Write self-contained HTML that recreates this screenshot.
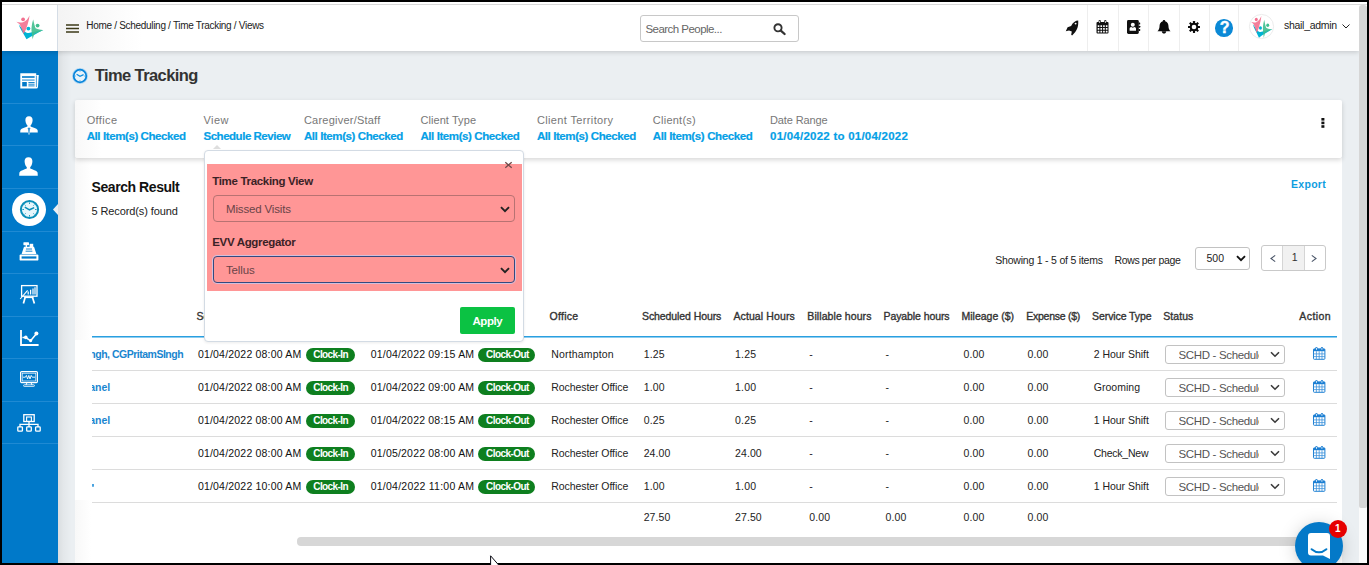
<!DOCTYPE html>
<html lang="en"><head><meta charset="utf-8"><title>Time Tracking</title>
<style>
html,body{margin:0;padding:0;}
body{width:1369px;height:565px;overflow:hidden;position:relative;background:#000;font-family:"Liberation Sans",sans-serif;}
.a{position:absolute;box-sizing:border-box;}
.t{position:absolute;white-space:nowrap;font-family:"Liberation Sans",sans-serif;z-index:10;}
#page{left:2px;top:2px;width:1365px;height:561px;background:#ebeff2;overflow:hidden;}
#topline{left:2px;top:2px;width:1365px;height:3px;background:#fff;border-bottom:1px solid #d9d9d9;z-index:6;}
#header{left:2px;top:5px;width:1357px;height:46px;background:linear-gradient(90deg,#f4f4f4 58px,#ffffff 140px);box-shadow:0 1px 5px rgba(0,0,0,.18);z-index:5;}
#logo{left:2px;top:5px;width:56px;height:46px;background:#fff;border-right:1px solid #d5dde6;z-index:6;}
#side{left:2px;top:51px;width:56px;height:512px;background:#0079c9;z-index:4;}
.sep{left:2px;width:56px;height:1px;background:#1f8ad3;z-index:4;}
.vsep{top:5px;width:1px;height:46px;background:#eeeeee;z-index:6;}
.card{background:#fff;}
#filter{left:75px;top:100px;width:1267px;height:58px;background:linear-gradient(90deg,#f8f8f8 0,#fff 26px);box-shadow:0 2px 5px rgba(0,0,0,.16);border-radius:2px;z-index:3;}
#result{left:75px;top:158px;width:1267px;height:405px;background:linear-gradient(90deg,#f8f8f8 0,#fff 16px);z-index:2;}
.rline{left:92px;width:1245px;height:1px;background:#dcdcdc;z-index:3;}
.badge{height:13.4px;border-radius:7px;background:#0e7f1f;z-index:4;}
.sel{background:#fff;border:1px solid #c2c2c2;border-radius:3px;z-index:4;}
svg{position:absolute;overflow:visible;}

</style></head><body>
<div class="a" id="page"></div>
<div class="a" id="topline"></div>
<div class="a" id="header"></div>
<div class="a" id="logo"></div>
<div class="a" id="side"></div>
<!-- scrollbar -->
<div class="a" style="left:1359px;top:5px;width:8px;height:558px;background:#fbfbfb;z-index:7;"></div>
<div class="a" style="left:1359.3px;top:5px;width:7.7px;height:503px;background:#d6d6d6;border-radius:3px 3px 2px 2px;z-index:8;"></div>
<!-- cards -->
<div class="a" id="result"></div>
<div class="a" id="filter"></div>
<div class="a sep" style="top:103px"></div>
<div class="a sep" style="top:145px"></div>
<div class="a sep" style="top:188px"></div>
<div class="a sep" style="top:231px"></div>
<div class="a sep" style="top:273px"></div>
<div class="a sep" style="top:316px"></div>
<div class="a sep" style="top:358px"></div>
<div class="a sep" style="top:401px"></div>
<div class="a sep" style="top:443px"></div>
<div class="a vsep" style="left:1087px"></div>
<div class="a vsep" style="left:1118px"></div>
<div class="a vsep" style="left:1148px"></div>
<div class="a vsep" style="left:1179px"></div>
<div class="a vsep" style="left:1209px"></div>
<div class="a vsep" style="left:1238px"></div>
<div class="a" style="left:92px;top:336px;width:1245px;height:1px;background:#2a9fe0;z-index:3;"></div><div class="a" style="left:92px;top:337px;width:1245px;height:1px;background:#8ccdf0;z-index:3;"></div>
<div class="a rline" style="top:370px"></div>
<div class="a rline" style="top:403px"></div>
<div class="a rline" style="top:436px"></div>
<div class="a rline" style="top:469px"></div>
<div class="a rline" style="top:502px"></div>
<div class="a badge" style="left:305.8px;top:348.2px;width:49px;"></div>
<div class="a badge" style="left:478.2px;top:348.2px;width:56.6px;"></div>
<div class="a sel" style="left:1165px;top:345.0px;width:120px;height:19px;"></div>
<svg style="left:1269.8px;top:350.9px;z-index:5" width="10" height="7" viewBox="0 0 10 7"><path d="M1 1.2 L5 5.2 L9 1.2" fill="none" stroke="#3a3a3a" stroke-width="1.6"/></svg>
<svg style="left:1313.3px;top:347.3px;z-index:5" width="12.4" height="12.8" viewBox="0 0 12.4 12.8"><rect x="0.5" y="1.9" width="11.4" height="10.4" rx="0.8" fill="#fff" stroke="#1c7fd3" stroke-width="1"/><rect x="0.5" y="1.9" width="11.4" height="2.3" fill="#1c7fd3"/><rect x="2.3" y="0" width="2.3" height="3.6" rx="1.1" fill="#1c7fd3"/><rect x="7.8" y="0" width="2.3" height="3.6" rx="1.1" fill="#1c7fd3"/><rect x="3.05" y="0.7" width="0.8" height="2.2" rx="0.4" fill="#fff"/><rect x="8.55" y="0.7" width="0.8" height="2.2" rx="0.4" fill="#fff"/><path d="M0.5 6.9H11.9M0.5 9.6H11.9M3.4 4.2V12.3M6.2 4.2V12.3M9 4.2V12.3" stroke="#3f93dc" stroke-width="0.8" fill="none"/></svg>
<div class="a badge" style="left:305.8px;top:381.2px;width:49px;"></div>
<div class="a badge" style="left:478.2px;top:381.2px;width:56.6px;"></div>
<div class="a sel" style="left:1165px;top:378.0px;width:120px;height:19px;"></div>
<svg style="left:1269.8px;top:383.9px;z-index:5" width="10" height="7" viewBox="0 0 10 7"><path d="M1 1.2 L5 5.2 L9 1.2" fill="none" stroke="#3a3a3a" stroke-width="1.6"/></svg>
<svg style="left:1313.3px;top:380.3px;z-index:5" width="12.4" height="12.8" viewBox="0 0 12.4 12.8"><rect x="0.5" y="1.9" width="11.4" height="10.4" rx="0.8" fill="#fff" stroke="#1c7fd3" stroke-width="1"/><rect x="0.5" y="1.9" width="11.4" height="2.3" fill="#1c7fd3"/><rect x="2.3" y="0" width="2.3" height="3.6" rx="1.1" fill="#1c7fd3"/><rect x="7.8" y="0" width="2.3" height="3.6" rx="1.1" fill="#1c7fd3"/><rect x="3.05" y="0.7" width="0.8" height="2.2" rx="0.4" fill="#fff"/><rect x="8.55" y="0.7" width="0.8" height="2.2" rx="0.4" fill="#fff"/><path d="M0.5 6.9H11.9M0.5 9.6H11.9M3.4 4.2V12.3M6.2 4.2V12.3M9 4.2V12.3" stroke="#3f93dc" stroke-width="0.8" fill="none"/></svg>
<div class="a badge" style="left:305.8px;top:414.2px;width:49px;"></div>
<div class="a badge" style="left:478.2px;top:414.2px;width:56.6px;"></div>
<div class="a sel" style="left:1165px;top:411.0px;width:120px;height:19px;"></div>
<svg style="left:1269.8px;top:416.9px;z-index:5" width="10" height="7" viewBox="0 0 10 7"><path d="M1 1.2 L5 5.2 L9 1.2" fill="none" stroke="#3a3a3a" stroke-width="1.6"/></svg>
<svg style="left:1313.3px;top:413.3px;z-index:5" width="12.4" height="12.8" viewBox="0 0 12.4 12.8"><rect x="0.5" y="1.9" width="11.4" height="10.4" rx="0.8" fill="#fff" stroke="#1c7fd3" stroke-width="1"/><rect x="0.5" y="1.9" width="11.4" height="2.3" fill="#1c7fd3"/><rect x="2.3" y="0" width="2.3" height="3.6" rx="1.1" fill="#1c7fd3"/><rect x="7.8" y="0" width="2.3" height="3.6" rx="1.1" fill="#1c7fd3"/><rect x="3.05" y="0.7" width="0.8" height="2.2" rx="0.4" fill="#fff"/><rect x="8.55" y="0.7" width="0.8" height="2.2" rx="0.4" fill="#fff"/><path d="M0.5 6.9H11.9M0.5 9.6H11.9M3.4 4.2V12.3M6.2 4.2V12.3M9 4.2V12.3" stroke="#3f93dc" stroke-width="0.8" fill="none"/></svg>
<div class="a badge" style="left:305.8px;top:447.2px;width:49px;"></div>
<div class="a badge" style="left:478.2px;top:447.2px;width:56.6px;"></div>
<div class="a sel" style="left:1165px;top:444.0px;width:120px;height:19px;"></div>
<svg style="left:1269.8px;top:449.9px;z-index:5" width="10" height="7" viewBox="0 0 10 7"><path d="M1 1.2 L5 5.2 L9 1.2" fill="none" stroke="#3a3a3a" stroke-width="1.6"/></svg>
<svg style="left:1313.3px;top:446.3px;z-index:5" width="12.4" height="12.8" viewBox="0 0 12.4 12.8"><rect x="0.5" y="1.9" width="11.4" height="10.4" rx="0.8" fill="#fff" stroke="#1c7fd3" stroke-width="1"/><rect x="0.5" y="1.9" width="11.4" height="2.3" fill="#1c7fd3"/><rect x="2.3" y="0" width="2.3" height="3.6" rx="1.1" fill="#1c7fd3"/><rect x="7.8" y="0" width="2.3" height="3.6" rx="1.1" fill="#1c7fd3"/><rect x="3.05" y="0.7" width="0.8" height="2.2" rx="0.4" fill="#fff"/><rect x="8.55" y="0.7" width="0.8" height="2.2" rx="0.4" fill="#fff"/><path d="M0.5 6.9H11.9M0.5 9.6H11.9M3.4 4.2V12.3M6.2 4.2V12.3M9 4.2V12.3" stroke="#3f93dc" stroke-width="0.8" fill="none"/></svg>
<div class="a badge" style="left:305.8px;top:480.2px;width:49px;"></div>
<div class="a badge" style="left:478.2px;top:480.2px;width:56.6px;"></div>
<div class="a sel" style="left:1165px;top:477.0px;width:120px;height:19px;"></div>
<svg style="left:1269.8px;top:482.9px;z-index:5" width="10" height="7" viewBox="0 0 10 7"><path d="M1 1.2 L5 5.2 L9 1.2" fill="none" stroke="#3a3a3a" stroke-width="1.6"/></svg>
<svg style="left:1313.3px;top:479.3px;z-index:5" width="12.4" height="12.8" viewBox="0 0 12.4 12.8"><rect x="0.5" y="1.9" width="11.4" height="10.4" rx="0.8" fill="#fff" stroke="#1c7fd3" stroke-width="1"/><rect x="0.5" y="1.9" width="11.4" height="2.3" fill="#1c7fd3"/><rect x="2.3" y="0" width="2.3" height="3.6" rx="1.1" fill="#1c7fd3"/><rect x="7.8" y="0" width="2.3" height="3.6" rx="1.1" fill="#1c7fd3"/><rect x="3.05" y="0.7" width="0.8" height="2.2" rx="0.4" fill="#fff"/><rect x="8.55" y="0.7" width="0.8" height="2.2" rx="0.4" fill="#fff"/><path d="M0.5 6.9H11.9M0.5 9.6H11.9M3.4 4.2V12.3M6.2 4.2V12.3M9 4.2V12.3" stroke="#3f93dc" stroke-width="0.8" fill="none"/></svg>
<!-- pagination -->
<div class="a sel" style="left:1195.4px;top:247px;width:55px;height:23px;"></div>
<svg style="left:1235.5px;top:255px;z-index:5" width="10" height="7" viewBox="0 0 10 7"><path d="M1 1.2 L5 5.2 L9 1.2" fill="none" stroke="#111" stroke-width="1.9"/></svg>
<div class="a" style="left:1261px;top:245px;width:65px;height:26px;background:#fff;border:1px solid #c9c9c9;border-radius:3px;z-index:4;"></div>
<div class="a" style="left:1282px;top:246px;width:23px;height:24px;background:#f1f1f1;border-left:1px solid #d5d5d5;border-right:1px solid #d5d5d5;z-index:5;"></div>
<svg style="left:1270.2px;top:255.1px;z-index:6" width="6" height="7" viewBox="0 0 6 7"><path d="M5.2 0.4 L1 3.5 L5.2 6.6" fill="none" stroke="#4a5568" stroke-width="1.1"/></svg>
<svg style="left:1311.4px;top:255.1px;z-index:6" width="6" height="7" viewBox="0 0 6 7"><path d="M0.8 0.4 L5 3.5 L0.8 6.6" fill="none" stroke="#4a5568" stroke-width="1.1"/></svg>
<!-- horizontal scrollbar -->
<div class="a" style="left:297px;top:537px;width:1030px;height:8.8px;background:#d7d7d7;border-radius:4px;z-index:3;"></div>
<!-- popup -->
<div class="a" style="left:204px;top:150px;width:320px;height:192px;background:#fff;border:1px solid #d3dbe4;border-radius:4px;box-shadow:0 1px 3px rgba(0,0,0,.08);z-index:20;"></div>
<svg style="left:213px;top:145px;z-index:21" width="8" height="4" viewBox="0 0 8 4"><path d="M0 4 L4 0 L8 4Z" fill="#dedede"/></svg>
<div class="a" style="left:207px;top:164px;width:315px;height:127px;background:#ff9696;z-index:21;"></div>
<div class="a" style="left:213px;top:195px;width:302px;height:27px;border:1px solid #b87272;border-radius:4px;z-index:22;"></div>
<div class="a" style="left:213px;top:256px;width:302px;height:27px;border:1px solid #34497f;border-radius:4px;box-shadow:0 0 0 1px rgba(200,200,235,.8);z-index:22;"></div>
<svg style="left:500.4px;top:205.5px;z-index:23" width="10" height="7" viewBox="0 0 10 7"><path d="M1 1.2 L5 5.2 L9 1.2" fill="none" stroke="#222" stroke-width="1.9"/></svg>
<svg style="left:500.4px;top:266.5px;z-index:23" width="10" height="7" viewBox="0 0 10 7"><path d="M1 1.2 L5 5.2 L9 1.2" fill="none" stroke="#222" stroke-width="1.9"/></svg>
<svg style="left:505px;top:162px;z-index:23" width="7" height="6" viewBox="0 0 7 6"><path d="M0.3 0.2 L6.7 5.8 M6.7 0.2 L0.3 5.8" stroke="#6e4a4a" stroke-width="1.25"/></svg>
<div class="a" style="left:460px;top:307px;width:55px;height:27px;background:#0bc243;border-radius:2px;z-index:22;"></div>
<!-- chat bubble -->
<div class="a" style="left:1295px;top:521.8px;width:48.4px;height:48.4px;border-radius:50%;background:#0479c8;box-shadow:0 2px 18px rgba(0,0,0,.17),0 1px 5px rgba(0,0,0,.06);z-index:40;"></div>
<svg style="left:1308px;top:533px;z-index:41" width="22" height="26" viewBox="0 0 22 26"><path d="M3 0 H19 Q22 0 22 3 V26 L15 22.5 H3 Q0 22.5 0 19.5 V3 Q0 0 3 0Z" fill="#fff"/><path d="M3.6 16.2 Q11 22.4 18.4 16.2" fill="none" stroke="#0479c8" stroke-width="2" stroke-linecap="round"/></svg>
<div class="a" style="left:1328.6px;top:519.6px;width:18.8px;height:18.8px;border-radius:50%;background:#e60000;z-index:41;"></div>
<!-- bottom frame -->
<div class="a" style="left:0;top:563px;width:1369px;height:2px;background:#000;z-index:50;"></div>
<!-- logo -->
<svg id="lg" style="left:16px;top:14px;z-index:7" width="28" height="27" viewBox="16 14 28 27">
<g>
<path d="M18.7 24.5 C20.6 26.6 22.8 29.4 24.8 31.4 C26.6 33.2 28.6 33.4 31 32.6 C35 31.2 39 30.4 43.3 29.9 C38 32.6 32 35.8 26.5 39.3 C24.6 35.6 22.9 33 21.6 30.8 C20.3 28.6 19.4 26.4 18.7 24.5Z" fill="#00b3d4"/>
<circle cx="28.4" cy="28.6" r="1.9" fill="#00b3d4"/>
<path d="M33.2 19.4 C33.8 22 34.6 26 35.6 28.2 C38.5 29.6 41 30 43.3 29.9 C40 31.5 36.6 33 34.2 34 L32.6 39.3 C32.1 35 31.3 31 31.5 28 C31.8 24.6 32.5 21.6 33.2 19.4Z" fill="#3fbf8f" opacity=".9"/>
<circle cx="37.6" cy="25.6" r="1.9" fill="#3fbf8f"/>
<path d="M29.5 15.4 C29.2 19.4 28 23 26.8 27 C25.8 30 24.6 32.6 23.4 33.9 C22.6 31 21.2 27.5 19.6 24.2 L16.4 21.8 C19 22.8 21.5 22.8 23.6 22 C26 21 28 18.6 29.5 15.4Z" fill="#f2708f" opacity=".9"/>
<circle cx="23.1" cy="19.3" r="1.9" fill="#f2708f"/>
</g>
</svg>
<!-- avatar -->
<div class="a" style="left:1249px;top:14.2px;width:24.6px;height:24.6px;border-radius:50%;background:#fff;border:1px solid #ececec;z-index:7;"></div>
<svg style="left:1250.7px;top:15.5px;z-index:8" width="21.3" height="21.8" viewBox="16.4 15.4 27 24" preserveAspectRatio="none"><g>
<path d="M18.7 24.5 C20.6 26.6 22.8 29.4 24.8 31.4 C26.6 33.2 28.6 33.4 31 32.6 C35 31.2 39 30.4 43.3 29.9 C38 32.6 32 35.8 26.5 39.3 C24.6 35.6 22.9 33 21.6 30.8 C20.3 28.6 19.4 26.4 18.7 24.5Z" fill="#00b3d4"/>
<circle cx="28.4" cy="28.6" r="1.9" fill="#00b3d4"/>
<path d="M33.2 19.4 C33.8 22 34.6 26 35.6 28.2 C38.5 29.6 41 30 43.3 29.9 C40 31.5 36.6 33 34.2 34 L32.6 39.3 C32.1 35 31.3 31 31.5 28 C31.8 24.6 32.5 21.6 33.2 19.4Z" fill="#3fbf8f" opacity=".9"/>
<circle cx="37.6" cy="25.6" r="1.9" fill="#3fbf8f"/>
<path d="M29.5 15.4 C29.2 19.4 28 23 26.8 27 C25.8 30 24.6 32.6 23.4 33.9 C22.6 31 21.2 27.5 19.6 24.2 L16.4 21.8 C19 22.8 21.5 22.8 23.6 22 C26 21 28 18.6 29.5 15.4Z" fill="#f2708f" opacity=".9"/>
<circle cx="23.1" cy="19.3" r="1.9" fill="#f2708f"/>
</g></svg>
<svg style="left:1341.7px;top:23.5px;z-index:8" width="8" height="5" viewBox="0 0 8 5"><path d="M0.5 0.5 L4 4 L7.5 0.5" fill="none" stroke="#222" stroke-width="1"/></svg>
<!-- hamburger -->
<svg style="left:66px;top:23.5px;z-index:7" width="13" height="9" viewBox="0 0 13 9"><path d="M0 0.9H13M0 4.4H13M0 7.9H13" stroke="#3c3a18" stroke-width="1.5"/></svg>
<!-- search box -->
<div class="a" style="left:640px;top:15px;width:159px;height:27px;background:#fff;border:1px solid #c8c8c8;border-radius:3px;z-index:7;"></div>
<svg style="left:773px;top:23.3px;z-index:8" width="13" height="12" viewBox="0 0 13 12"><circle cx="5" cy="4.8" r="3.6" fill="none" stroke="#333" stroke-width="1.9"/><path d="M7.8 7.6 L11.6 11" stroke="#333" stroke-width="2.3" stroke-linecap="round"/></svg>
<!-- rocket -->
<svg style="left:1065px;top:19.5px;z-index:7" width="14" height="16" viewBox="0 0 14 16"><path d="M13.2 0.6 C10.4 0.6 8 2.6 6.1 6 L2.6 7.2 L0.8 11.2 L4 10.4 L6.8 11.5 L6.2 14.8 L7.1 15.5 L10.1 12.2 C12.5 9 13.5 6 13.2 0.6Z" fill="#111"/><circle cx="10.6" cy="3.6" r="0.95" fill="#fff"/></svg>
<!-- calendar -->
<svg style="left:1096.2px;top:20.2px;z-index:7" width="13" height="14" viewBox="0 0 13 14"><rect x="0.5" y="1.9" width="12" height="11.6" rx="1" fill="#111"/><rect x="2.6" y="0" width="2.2" height="3.8" rx="1.1" fill="#111"/><rect x="8.2" y="0" width="2.2" height="3.8" rx="1.1" fill="#111"/><rect x="3.3" y="0.7" width="0.8" height="2.4" rx="0.4" fill="#fff"/><rect x="8.9" y="0.7" width="0.8" height="2.4" rx="0.4" fill="#fff"/><g fill="#fff"><rect x="1.7" y="5.2" width="1.7" height="1.7" rx="0.3"/><rect x="4.4" y="5.2" width="1.7" height="1.7" rx="0.3"/><rect x="7.1" y="5.2" width="1.7" height="1.7" rx="0.3"/><rect x="9.8" y="5.2" width="1.7" height="1.7" rx="0.3"/><rect x="1.7" y="8.0" width="1.7" height="1.7" rx="0.3"/><rect x="4.4" y="8.0" width="1.7" height="1.7" rx="0.3"/><rect x="7.1" y="8.0" width="1.7" height="1.7" rx="0.3"/><rect x="9.8" y="8.0" width="1.7" height="1.7" rx="0.3"/><rect x="1.7" y="10.8" width="1.7" height="1.7" rx="0.3"/><rect x="4.4" y="10.8" width="1.7" height="1.7" rx="0.3"/><rect x="7.1" y="10.8" width="1.7" height="1.7" rx="0.3"/><rect x="9.8" y="10.8" width="1.7" height="1.7" rx="0.3"/></g></svg>
<!-- address book -->
<svg style="left:1127px;top:20px;z-index:7" width="13.4" height="14" viewBox="0 0 13.4 14"><rect x="0" y="0" width="11.8" height="14" rx="1.4" fill="#111"/><rect x="11.6" y="2.6" width="1.6" height="2" rx="0.5" fill="#111"/><rect x="11.6" y="5.8" width="1.6" height="2" rx="0.5" fill="#111"/><rect x="11.6" y="9" width="1.6" height="2" rx="0.5" fill="#111"/><circle cx="5.8" cy="4.7" r="2" fill="#fff"/><path d="M2.6 10.8 V8.6 Q2.6 7 4.2 7 L5.8 7.8 L7.4 7 Q9 7 9 8.6 V10.8Z" fill="#fff"/></svg>
<!-- bell -->
<svg style="left:1157.3px;top:20.2px;z-index:7" width="14" height="14" viewBox="0 0 14 14"><path d="M7 0 C7.9 0 8.3 0.6 8.2 1.3 C10.6 2 11.5 4 11.5 6.4 C11.5 8.8 12.4 10 13.6 11.3 H0.4 C1.6 10 2.5 8.8 2.5 6.4 C2.5 4 3.4 2 5.8 1.3 C5.7 0.6 6.1 0 7 0Z" fill="#0a0a0a"/><path d="M4.8 11.2 H9.2 C9.2 14.4 4.8 14.4 4.8 11.2Z" fill="#0a0a0a"/></svg>
<!-- gear -->
<svg style="left:1188.2px;top:21.1px;z-index:7" width="12" height="12" viewBox="-6 -6 12 12"><g fill="#0a0a0a"><circle r="4.3"/><rect x="-1.1" y="-6" width="2.2" height="12" rx="0.4"/><rect x="-1.1" y="-6" width="2.2" height="12" rx="0.4" transform="rotate(45)"/><rect x="-1.1" y="-6" width="2.2" height="12" rx="0.4" transform="rotate(90)"/><rect x="-1.1" y="-6" width="2.2" height="12" rx="0.4" transform="rotate(135)"/></g><circle r="2.3" fill="#fff"/></svg>
<!-- help -->
<div class="a" style="left:1215.3px;top:19.2px;width:17.6px;height:17.6px;border-radius:50%;background:#0b89d6;z-index:7;"></div>
<!-- title clock -->
<svg style="left:72.4px;top:67.6px;z-index:7" width="16" height="16" viewBox="0 0 16 16"><circle cx="8" cy="8" r="7.3" fill="none" stroke="#9fd0f2" stroke-width="1.4" opacity=".7"/><circle cx="8" cy="8" r="6.3" fill="#e9f3fa" stroke="#0a86dc" stroke-width="1.8"/><path d="M4.6 6.2 L8 8.3 L11.6 6.6" fill="none" stroke="#0d8ddf" stroke-width="1.2"/><path d="M8 2.6V3.6M8 12.4V13.4M2.6 8H3.6M12.4 8H13.4" stroke="#0d8ddf" stroke-width="0.9"/></svg>
<!-- three dots -->
<svg style="left:1320.8px;top:118.4px;z-index:7" width="4" height="10" viewBox="0 0 4 10"><rect x="0.4" y="0" width="3" height="2.6" fill="#111"/><rect x="0.4" y="3.6" width="3" height="2.6" fill="#111"/><rect x="0.4" y="7.2" width="3" height="2.6" fill="#111"/></svg>
<!-- mouse cursor -->
<svg style="left:489.6px;top:555.4px;z-index:55" width="12" height="12" viewBox="0 0 12 12"><path d="M0.6 0.8 V12 H10.4 Z" fill="#fff" stroke="#0a0a14" stroke-width="1"/></svg>
<!-- sidebar icons -->
<svg style="left:20px;top:73px;z-index:8" width="19" height="16" viewBox="0 0 19 16">
<path d="M0.3 0.3 H16.2 V2 H18.8 L18 14 Q17.8 15.6 16.2 15.6 H0.3 Z" fill="#fff"/>
<path d="M16.4 2.6 V14" stroke="#0079c9" stroke-width="0.7"/>
<rect x="2" y="3.2" width="12.6" height="1.6" fill="#0079c9"/>
<rect x="2" y="6.6" width="12.6" height="0.9" fill="#0079c9"/>
<rect x="2.2" y="9" width="4.6" height="4.4" fill="#0079c9"/>
<path d="M8.4 9.5H14.6M8.4 11.2H14.6M8.4 12.9H14.6" stroke="#0079c9" stroke-width="0.9"/>
</svg>
<svg style="left:20.2px;top:115.6px;z-index:8" width="18" height="19" viewBox="0 0 18 19">
<path d="M9 0.2 C11.6 0.2 12.8 2 12.6 4.4 C12.4 6.8 11.4 8.6 10.6 9.2 L10.6 10.4 C13 11.4 16.4 12 17.6 14 L17.8 16.6 H0.2 L0.4 14 C1.6 12 5 11.4 7.4 10.4 L7.4 9.2 C6.6 8.6 5.6 6.8 5.4 4.4 C5.2 2 6.4 0.2 9 0.2Z" fill="#fff"/>
<path d="M9 11 L10.1 12.2 L9.7 16.8 L9 18.6 L8.3 16.8 L7.9 12.2Z" fill="#0079c9" stroke="#fff" stroke-width="0.5"/>
</svg>
<svg style="left:19.4px;top:157px;z-index:8" width="19" height="19" viewBox="0 0 19 19">
<path d="M9.5 0.2 C12.3 0.2 13.6 2.2 13.4 4.8 C13.2 7.4 12.2 9.4 11.2 10.2 L11.2 11.6 C13.8 12.8 17.4 13.4 18.6 15.6 L18.8 18.8 H0.2 L0.4 15.6 C1.6 13.4 5.2 12.8 7.8 11.6 L7.8 10.2 C6.8 9.4 5.8 7.4 5.6 4.8 C5.4 2.2 6.7 0.2 9.5 0.2Z" fill="#fff"/>
</svg>
<div class="a" style="left:12px;top:192.5px;width:33.8px;height:33.8px;border-radius:50%;background:#fff;z-index:8;"></div>
<svg style="left:18.5px;top:199px;z-index:9" width="21" height="21" viewBox="0 0 21 21"><circle cx="10.5" cy="10.5" r="8.6" fill="#e6f6fb" stroke="#0b8fb8" stroke-width="2"/><path d="M5.8 8.2 L10.5 10.8 L15.2 8.6" fill="none" stroke="#0b8fb8" stroke-width="1.5"/><path d="M10.5 3.4V5M10.5 16V17.6M3.4 10.5H5M16 10.5H17.6M5.6 5.6L6.6 6.6M15.4 5.6L14.4 6.6M5.6 15.4L6.6 14.4M15.4 15.4L14.4 14.4" stroke="#0b8fb8" stroke-width="0.9"/></svg>
<svg style="left:53px;top:203.5px;z-index:9" width="5" height="11" viewBox="0 0 5 11"><path d="M5 0 L0 5.5 L5 11Z" fill="#ebeff2"/></svg>
<svg style="left:19px;top:242px;z-index:8" width="20" height="19" viewBox="0 0 20 19">
<rect x="4.4" y="0.2" width="5.6" height="3" rx="0.6" fill="#fff"/><rect x="6.6" y="3" width="1.4" height="2" fill="#fff"/>
<rect x="10.6" y="1.8" width="3.6" height="3.2" fill="#fff"/>
<path d="M5 4.8 H15 L17.4 12 H2.6 Z" fill="#fff"/>
<path d="M7 7H13M6.6 9.2H13.4" stroke="#0079c9" stroke-width="0.9"/>
<rect x="0.6" y="12.4" width="18.8" height="6.2" rx="1.2" fill="#fff"/>
<rect x="2.6" y="14.4" width="14.8" height="2.2" fill="#0079c9"/>
</svg>
<svg style="left:20.4px;top:285px;z-index:8" width="18" height="19" viewBox="0 0 18 19">
<rect x="1.6" y="0.6" width="15.4" height="10.6" fill="none" stroke="#fff" stroke-width="1.3"/>
<path d="M8.2 9.6V6.6M10.6 9.6V4.8M13 9.6V3.4M15 9.6V2.2" stroke="#fff" stroke-width="1.2"/>
<path d="M0.2 14 L7.6 5.4" stroke="#fff" stroke-width="1.1"/>
<path d="M5.4 11.4 L3.4 18.6 M12.2 11.4 L14.4 18.6" stroke="#fff" stroke-width="1.7"/>
<path d="M4.4 12.4H13.4" stroke="#fff" stroke-width="1.4"/>
</svg>
<svg style="left:20px;top:330px;z-index:8" width="19" height="16" viewBox="0 0 19 16">
<path d="M1 0 V15 H18.6" fill="none" stroke="#fff" stroke-width="1.8"/>
<path d="M2.4 7.6 L5.8 7.6 L10.6 10.8 L16.2 4" fill="none" stroke="#fff" stroke-width="1.5"/>
<circle cx="5.8" cy="7.4" r="1.8" fill="#fff"/><circle cx="10.6" cy="10.6" r="1.6" fill="#fff"/><circle cx="16.4" cy="3.6" r="2" fill="#fff"/>
</svg>
<svg style="left:20.4px;top:371px;z-index:8" width="18" height="16" viewBox="0 0 18 16">
<rect x="0.6" y="0.6" width="16.8" height="11" rx="1" fill="none" stroke="#fff" stroke-width="1.2"/>
<rect x="2.2" y="2.2" width="13.6" height="7.8" fill="none" stroke="#fff" stroke-width="0.7"/>
<path d="M3 6.2 H5.4 L6.4 4.4 L7.6 8 L8.8 4.4 L10 8 L11.2 4.4 L12.2 6.2 H15" fill="none" stroke="#fff" stroke-width="0.9"/>
<path d="M7 11.6 L6 14 M11 11.6 L12 14" stroke="#fff" stroke-width="1"/>
<rect x="3.6" y="13.8" width="10.8" height="1.6" rx="0.6" fill="none" stroke="#fff" stroke-width="0.8"/>
</svg>
<svg style="left:17px;top:414px;z-index:8" width="24" height="18" viewBox="0 0 24 18">
<rect x="6.8" y="0.7" width="10.4" height="6.8" fill="none" stroke="#fff" stroke-width="1.3"/>
<rect x="9.6" y="3" width="4.8" height="4.4" fill="none" stroke="#fff" stroke-width="1.1"/>
<path d="M12 7.6 V13 M3 13 V10.4 H21 V13" fill="none" stroke="#fff" stroke-width="1.3"/>
<rect x="0.8" y="12.8" width="4.6" height="4.4" rx="0.8" fill="none" stroke="#fff" stroke-width="1.3"/>
<rect x="9.7" y="12.8" width="4.6" height="4.4" rx="0.8" fill="none" stroke="#fff" stroke-width="1.3"/>
<rect x="18.6" y="12.8" width="4.6" height="4.4" rx="0.8" fill="none" stroke="#fff" stroke-width="1.3"/>
</svg>
<!-- name clip mask + content inset shadow -->
<div class="a" style="left:75px;top:340px;width:16.9px;height:160px;background:#fff;z-index:3;"></div>
<div class="a" style="left:92px;top:484px;width:1.6px;height:3.4px;background:#4aa3df;z-index:3;border-radius:0 0 1px 1px;"></div>
<div class="a" style="left:58px;top:51px;width:14px;height:512px;background:linear-gradient(90deg,rgba(0,0,0,.075),rgba(0,0,0,.03) 40%,rgba(0,0,0,0));z-index:1;"></div>

<span class="t" id="t0" style="left:86.3px;top:19.3px;font-size:10px;line-height:14px;font-weight:400;color:#222;letter-spacing:-0.303px;">Home / Scheduling / Time Tracking / Views</span>
<span class="t" id="t1" style="left:645.5px;top:20.6px;font-size:11.5px;line-height:16px;font-weight:400;color:#666;letter-spacing:-0.546px;">Search People...</span>
<span class="t" id="t2" style="left:1284.0px;top:18.2px;font-size:10.5px;line-height:15px;font-weight:400;color:#222;letter-spacing:-0.286px;">shail_admin</span>
<span class="t" id="t3" style="left:94.7px;top:63.9px;font-size:16.5px;line-height:23px;font-weight:700;color:#333;letter-spacing:-0.582px;">Time Tracking</span>
<span class="t" id="t4" style="left:86.7px;top:112.5px;font-size:11px;line-height:15px;font-weight:400;color:#777;letter-spacing:0.378px;">Office</span>
<span class="t" id="t5" style="left:86.7px;top:127.8px;font-size:11.5px;line-height:16px;font-weight:700;color:#05a0e6;letter-spacing:-0.407px;-webkit-text-stroke:.2px #05a0e6;">All Item(s) Checked</span>
<span class="t" id="t6" style="left:203.5px;top:112.5px;font-size:11px;line-height:15px;font-weight:400;color:#777;letter-spacing:0.436px;">View</span>
<span class="t" id="t7" style="left:203.5px;top:127.8px;font-size:11.5px;line-height:16px;font-weight:700;color:#05a0e6;letter-spacing:-0.478px;-webkit-text-stroke:.2px #05a0e6;">Schedule Review</span>
<span class="t" id="t8" style="left:303.9px;top:112.5px;font-size:11px;line-height:15px;font-weight:400;color:#777;letter-spacing:0.229px;">Caregiver/Staff</span>
<span class="t" id="t9" style="left:303.9px;top:127.8px;font-size:11.5px;line-height:16px;font-weight:700;color:#05a0e6;letter-spacing:-0.412px;-webkit-text-stroke:.2px #05a0e6;">All Item(s) Checked</span>
<span class="t" id="t10" style="left:420.4px;top:112.5px;font-size:11px;line-height:15px;font-weight:400;color:#777;letter-spacing:0.079px;">Client Type</span>
<span class="t" id="t11" style="left:420.4px;top:127.8px;font-size:11.5px;line-height:16px;font-weight:700;color:#05a0e6;letter-spacing:-0.407px;-webkit-text-stroke:.2px #05a0e6;">All Item(s) Checked</span>
<span class="t" id="t12" style="left:536.9px;top:112.5px;font-size:11px;line-height:15px;font-weight:400;color:#777;letter-spacing:0.368px;">Client Territory</span>
<span class="t" id="t13" style="left:536.9px;top:127.8px;font-size:11.5px;line-height:16px;font-weight:700;color:#05a0e6;letter-spacing:-0.412px;-webkit-text-stroke:.2px #05a0e6;">All Item(s) Checked</span>
<span class="t" id="t14" style="left:652.8px;top:112.5px;font-size:11px;line-height:15px;font-weight:400;color:#777;letter-spacing:0.250px;">Client(s)</span>
<span class="t" id="t15" style="left:652.8px;top:127.8px;font-size:11.5px;line-height:16px;font-weight:700;color:#05a0e6;letter-spacing:-0.370px;-webkit-text-stroke:.2px #05a0e6;">All Item(s) Checked</span>
<span class="t" id="t16" style="left:770.0px;top:112.5px;font-size:11px;line-height:15px;font-weight:400;color:#777;letter-spacing:-0.122px;">Date Range</span>
<span class="t" id="t17" style="left:770.0px;top:127.8px;font-size:11.5px;line-height:16px;font-weight:700;color:#05a0e6;letter-spacing:0.239px;-webkit-text-stroke:.2px #05a0e6;">01/04/2022 to 01/04/2022</span>
<span class="t" id="t18" style="left:91.6px;top:177.0px;font-size:14px;line-height:20px;font-weight:700;color:#111;letter-spacing:-0.437px;">Search Result</span>
<span class="t" id="t19" style="left:91.6px;top:203.8px;font-size:11px;line-height:15px;font-weight:400;color:#222;letter-spacing:-0.115px;">5 Record(s) found</span>
<span class="t" id="t20" style="left:1291.1px;top:176.9px;font-size:10.5px;line-height:15px;font-weight:700;color:#0d9ddf;letter-spacing:0.272px;">Export</span>
<span class="t" id="t21" style="left:995.3px;top:253.1px;font-size:10.5px;line-height:15px;font-weight:400;color:#222;letter-spacing:-0.214px;">Showing 1 - 5 of 5 items</span>
<span class="t" id="t22" style="left:1114.4px;top:253.1px;font-size:10.5px;line-height:15px;font-weight:400;color:#222;letter-spacing:-0.340px;">Rows per page</span>
<span class="t" id="t23" style="left:1206.5px;top:251.1px;font-size:10.5px;line-height:15px;font-weight:400;color:#222;letter-spacing:0.023px;">500</span>
<span class="t" id="t24" style="left:1291.7px;top:250.3px;font-size:10.5px;line-height:15px;font-weight:400;color:#333;letter-spacing:-0.844px;">1</span>
<span class="t" id="t25" style="left:549.5px;top:308.8px;font-size:10.5px;line-height:15px;font-weight:400;color:#333;letter-spacing:0.294px;-webkit-text-stroke:.35px #333;">Office</span>
<span class="t" id="t26" style="left:642.0px;top:308.8px;font-size:10.5px;line-height:15px;font-weight:400;color:#333;letter-spacing:-0.084px;-webkit-text-stroke:.35px #333;">Scheduled Hours</span>
<span class="t" id="t27" style="left:733.4px;top:308.8px;font-size:10.5px;line-height:15px;font-weight:400;color:#333;letter-spacing:0.116px;-webkit-text-stroke:.35px #333;">Actual Hours</span>
<span class="t" id="t28" style="left:807.3px;top:308.8px;font-size:10.5px;line-height:15px;font-weight:400;color:#333;letter-spacing:0.082px;-webkit-text-stroke:.35px #333;">Billable hours</span>
<span class="t" id="t29" style="left:883.5px;top:308.8px;font-size:10.5px;line-height:15px;font-weight:400;color:#333;letter-spacing:-0.088px;-webkit-text-stroke:.35px #333;">Payable hours</span>
<span class="t" id="t30" style="left:961.5px;top:308.8px;font-size:10.5px;line-height:15px;font-weight:400;color:#333;letter-spacing:0.006px;-webkit-text-stroke:.35px #333;">Mileage ($)</span>
<span class="t" id="t31" style="left:1026.3px;top:308.8px;font-size:10.5px;line-height:15px;font-weight:400;color:#333;letter-spacing:-0.266px;-webkit-text-stroke:.35px #333;">Expense ($)</span>
<span class="t" id="t32" style="left:1092.1px;top:308.8px;font-size:10.5px;line-height:15px;font-weight:400;color:#333;letter-spacing:-0.101px;-webkit-text-stroke:.35px #333;">Service Type</span>
<span class="t" id="t33" style="left:1163.3px;top:308.8px;font-size:10.5px;line-height:15px;font-weight:400;color:#333;letter-spacing:0.053px;-webkit-text-stroke:.35px #333;">Status</span>
<span class="t" id="t34" style="left:1299.3px;top:308.8px;font-size:10.5px;line-height:15px;font-weight:400;color:#333;letter-spacing:0.419px;-webkit-text-stroke:.35px #333;">Action</span>
<span class="t" id="t35" style="left:89.3px;top:347.1px;font-size:10.5px;line-height:15px;font-weight:700;color:#1a86d0;letter-spacing:-0.493px;z-index:2;">ngh, CGPritamSIngh</span>
<span class="t" id="t36" style="left:197.9px;top:346.7px;font-size:10.5px;line-height:15px;font-weight:400;color:#111;letter-spacing:0.198px;">01/04/2022 08:00 AM</span>
<span class="t" id="t37" style="left:313.3px;top:348.0px;font-size:10px;line-height:14px;font-weight:700;color:#fff;letter-spacing:-0.607px;">Clock-In</span>
<span class="t" id="t38" style="left:370.7px;top:346.7px;font-size:10.5px;line-height:15px;font-weight:400;color:#111;letter-spacing:0.198px;">01/04/2022 09:15 AM</span>
<span class="t" id="t39" style="left:486.1px;top:348.0px;font-size:10px;line-height:14px;font-weight:700;color:#fff;letter-spacing:-0.576px;">Clock-Out</span>
<span class="t" id="t40" style="left:551.3px;top:347.1px;font-size:10.5px;line-height:15px;font-weight:400;color:#222;letter-spacing:0.163px;">Northampton</span>
<span class="t" id="t41" style="left:643.7px;top:347.1px;font-size:10.5px;line-height:15px;font-weight:400;color:#222;letter-spacing:0.166px;">1.25</span>
<span class="t" id="t42" style="left:735.1px;top:347.1px;font-size:10.5px;line-height:15px;font-weight:400;color:#222;letter-spacing:0.166px;">1.25</span>
<span class="t" id="t43" style="left:809.3px;top:347.1px;font-size:10.5px;line-height:15px;font-weight:400;color:#222;letter-spacing:0.500px;">-</span>
<span class="t" id="t44" style="left:885.5px;top:347.1px;font-size:10.5px;line-height:15px;font-weight:400;color:#222;letter-spacing:0.500px;">-</span>
<span class="t" id="t45" style="left:963.6px;top:347.1px;font-size:10.5px;line-height:15px;font-weight:400;color:#222;letter-spacing:0.091px;">0.00</span>
<span class="t" id="t46" style="left:1027.5px;top:347.1px;font-size:10.5px;line-height:15px;font-weight:400;color:#222;letter-spacing:0.141px;">0.00</span>
<span class="t" id="t47" style="left:1093.7px;top:347.1px;font-size:10.5px;line-height:15px;font-weight:400;color:#222;letter-spacing:-0.021px;">2 Hour Shift</span>
<span class="t" id="t48" style="left:1178.5px;top:347.1px;font-size:11.5px;line-height:16px;font-weight:400;color:#555;letter-spacing:-0.344px;width:80px;overflow:hidden;">SCHD - Schedule</span>
<span class="t" id="t49" style="left:89.3px;top:380.1px;font-size:10.5px;line-height:15px;font-weight:700;color:#1a86d0;letter-spacing:-0.079px;z-index:2;">anel</span>
<span class="t" id="t50" style="left:197.9px;top:379.7px;font-size:10.5px;line-height:15px;font-weight:400;color:#111;letter-spacing:0.198px;">01/04/2022 08:00 AM</span>
<span class="t" id="t51" style="left:313.3px;top:381.0px;font-size:10px;line-height:14px;font-weight:700;color:#fff;letter-spacing:-0.607px;">Clock-In</span>
<span class="t" id="t52" style="left:370.7px;top:379.7px;font-size:10.5px;line-height:15px;font-weight:400;color:#111;letter-spacing:0.198px;">01/04/2022 09:00 AM</span>
<span class="t" id="t53" style="left:486.1px;top:381.0px;font-size:10px;line-height:14px;font-weight:700;color:#fff;letter-spacing:-0.576px;">Clock-Out</span>
<span class="t" id="t54" style="left:551.3px;top:380.1px;font-size:10.5px;line-height:15px;font-weight:400;color:#222;letter-spacing:-0.070px;">Rochester Office</span>
<span class="t" id="t55" style="left:643.7px;top:380.1px;font-size:10.5px;line-height:15px;font-weight:400;color:#222;letter-spacing:0.166px;">1.00</span>
<span class="t" id="t56" style="left:735.1px;top:380.1px;font-size:10.5px;line-height:15px;font-weight:400;color:#222;letter-spacing:0.166px;">1.00</span>
<span class="t" id="t57" style="left:809.3px;top:380.1px;font-size:10.5px;line-height:15px;font-weight:400;color:#222;letter-spacing:0.500px;">-</span>
<span class="t" id="t58" style="left:885.5px;top:380.1px;font-size:10.5px;line-height:15px;font-weight:400;color:#222;letter-spacing:0.500px;">-</span>
<span class="t" id="t59" style="left:963.6px;top:380.1px;font-size:10.5px;line-height:15px;font-weight:400;color:#222;letter-spacing:0.091px;">0.00</span>
<span class="t" id="t60" style="left:1027.5px;top:380.1px;font-size:10.5px;line-height:15px;font-weight:400;color:#222;letter-spacing:0.141px;">0.00</span>
<span class="t" id="t61" style="left:1093.7px;top:380.1px;font-size:10.5px;line-height:15px;font-weight:400;color:#222;letter-spacing:0.036px;">Grooming</span>
<span class="t" id="t62" style="left:1178.5px;top:380.1px;font-size:11.5px;line-height:16px;font-weight:400;color:#555;letter-spacing:-0.344px;width:80px;overflow:hidden;">SCHD - Schedule</span>
<span class="t" id="t63" style="left:89.3px;top:413.1px;font-size:10.5px;line-height:15px;font-weight:700;color:#1a86d0;letter-spacing:-0.079px;z-index:2;">anel</span>
<span class="t" id="t64" style="left:197.9px;top:412.7px;font-size:10.5px;line-height:15px;font-weight:400;color:#111;letter-spacing:0.198px;">01/04/2022 08:00 AM</span>
<span class="t" id="t65" style="left:313.3px;top:414.0px;font-size:10px;line-height:14px;font-weight:700;color:#fff;letter-spacing:-0.607px;">Clock-In</span>
<span class="t" id="t66" style="left:370.7px;top:412.7px;font-size:10.5px;line-height:15px;font-weight:400;color:#111;letter-spacing:0.198px;">01/04/2022 08:15 AM</span>
<span class="t" id="t67" style="left:486.1px;top:414.0px;font-size:10px;line-height:14px;font-weight:700;color:#fff;letter-spacing:-0.576px;">Clock-Out</span>
<span class="t" id="t68" style="left:551.3px;top:413.1px;font-size:10.5px;line-height:15px;font-weight:400;color:#222;letter-spacing:-0.070px;">Rochester Office</span>
<span class="t" id="t69" style="left:643.7px;top:413.1px;font-size:10.5px;line-height:15px;font-weight:400;color:#222;letter-spacing:0.166px;">0.25</span>
<span class="t" id="t70" style="left:735.1px;top:413.1px;font-size:10.5px;line-height:15px;font-weight:400;color:#222;letter-spacing:0.166px;">0.25</span>
<span class="t" id="t71" style="left:809.3px;top:413.1px;font-size:10.5px;line-height:15px;font-weight:400;color:#222;letter-spacing:0.500px;">-</span>
<span class="t" id="t72" style="left:885.5px;top:413.1px;font-size:10.5px;line-height:15px;font-weight:400;color:#222;letter-spacing:0.500px;">-</span>
<span class="t" id="t73" style="left:963.6px;top:413.1px;font-size:10.5px;line-height:15px;font-weight:400;color:#222;letter-spacing:0.091px;">0.00</span>
<span class="t" id="t74" style="left:1027.5px;top:413.1px;font-size:10.5px;line-height:15px;font-weight:400;color:#222;letter-spacing:0.141px;">0.00</span>
<span class="t" id="t75" style="left:1093.7px;top:413.1px;font-size:10.5px;line-height:15px;font-weight:400;color:#222;letter-spacing:-0.021px;">1 Hour Shift</span>
<span class="t" id="t76" style="left:1178.5px;top:413.1px;font-size:11.5px;line-height:16px;font-weight:400;color:#555;letter-spacing:-0.344px;width:80px;overflow:hidden;">SCHD - Schedule</span>
<span class="t" id="t77" style="left:197.9px;top:445.7px;font-size:10.5px;line-height:15px;font-weight:400;color:#111;letter-spacing:0.198px;">01/04/2022 08:00 AM</span>
<span class="t" id="t78" style="left:313.3px;top:447.0px;font-size:10px;line-height:14px;font-weight:700;color:#fff;letter-spacing:-0.607px;">Clock-In</span>
<span class="t" id="t79" style="left:370.7px;top:445.7px;font-size:10.5px;line-height:15px;font-weight:400;color:#111;letter-spacing:0.198px;">01/05/2022 08:00 AM</span>
<span class="t" id="t80" style="left:486.1px;top:447.0px;font-size:10px;line-height:14px;font-weight:700;color:#fff;letter-spacing:-0.576px;">Clock-Out</span>
<span class="t" id="t81" style="left:551.3px;top:446.1px;font-size:10.5px;line-height:15px;font-weight:400;color:#222;letter-spacing:-0.070px;">Rochester Office</span>
<span class="t" id="t82" style="left:643.7px;top:446.1px;font-size:10.5px;line-height:15px;font-weight:400;color:#222;letter-spacing:0.064px;">24.00</span>
<span class="t" id="t83" style="left:735.1px;top:446.1px;font-size:10.5px;line-height:15px;font-weight:400;color:#222;letter-spacing:0.064px;">24.00</span>
<span class="t" id="t84" style="left:809.3px;top:446.1px;font-size:10.5px;line-height:15px;font-weight:400;color:#222;letter-spacing:0.500px;">-</span>
<span class="t" id="t85" style="left:885.5px;top:446.1px;font-size:10.5px;line-height:15px;font-weight:400;color:#222;letter-spacing:0.500px;">-</span>
<span class="t" id="t86" style="left:963.6px;top:446.1px;font-size:10.5px;line-height:15px;font-weight:400;color:#222;letter-spacing:0.091px;">0.00</span>
<span class="t" id="t87" style="left:1027.5px;top:446.1px;font-size:10.5px;line-height:15px;font-weight:400;color:#222;letter-spacing:0.141px;">0.00</span>
<span class="t" id="t88" style="left:1093.7px;top:446.1px;font-size:10.5px;line-height:15px;font-weight:400;color:#222;letter-spacing:-0.223px;">Check_New</span>
<span class="t" id="t89" style="left:1178.5px;top:446.1px;font-size:11.5px;line-height:16px;font-weight:400;color:#555;letter-spacing:-0.344px;width:80px;overflow:hidden;">SCHD - Schedule</span>
<span class="t" id="t90" style="left:197.9px;top:478.7px;font-size:10.5px;line-height:15px;font-weight:400;color:#111;letter-spacing:0.198px;">01/04/2022 10:00 AM</span>
<span class="t" id="t91" style="left:313.3px;top:480.0px;font-size:10px;line-height:14px;font-weight:700;color:#fff;letter-spacing:-0.607px;">Clock-In</span>
<span class="t" id="t92" style="left:370.7px;top:478.7px;font-size:10.5px;line-height:15px;font-weight:400;color:#111;letter-spacing:0.239px;">01/04/2022 11:00 AM</span>
<span class="t" id="t93" style="left:486.1px;top:480.0px;font-size:10px;line-height:14px;font-weight:700;color:#fff;letter-spacing:-0.576px;">Clock-Out</span>
<span class="t" id="t94" style="left:551.3px;top:479.1px;font-size:10.5px;line-height:15px;font-weight:400;color:#222;letter-spacing:-0.070px;">Rochester Office</span>
<span class="t" id="t95" style="left:643.7px;top:479.1px;font-size:10.5px;line-height:15px;font-weight:400;color:#222;letter-spacing:0.166px;">1.00</span>
<span class="t" id="t96" style="left:735.1px;top:479.1px;font-size:10.5px;line-height:15px;font-weight:400;color:#222;letter-spacing:0.166px;">1.00</span>
<span class="t" id="t97" style="left:809.3px;top:479.1px;font-size:10.5px;line-height:15px;font-weight:400;color:#222;letter-spacing:0.500px;">-</span>
<span class="t" id="t98" style="left:885.5px;top:479.1px;font-size:10.5px;line-height:15px;font-weight:400;color:#222;letter-spacing:0.500px;">-</span>
<span class="t" id="t99" style="left:963.6px;top:479.1px;font-size:10.5px;line-height:15px;font-weight:400;color:#222;letter-spacing:0.091px;">0.00</span>
<span class="t" id="t100" style="left:1027.5px;top:479.1px;font-size:10.5px;line-height:15px;font-weight:400;color:#222;letter-spacing:0.141px;">0.00</span>
<span class="t" id="t101" style="left:1093.7px;top:479.1px;font-size:10.5px;line-height:15px;font-weight:400;color:#222;letter-spacing:-0.021px;">1 Hour Shift</span>
<span class="t" id="t102" style="left:1178.5px;top:479.1px;font-size:11.5px;line-height:16px;font-weight:400;color:#555;letter-spacing:-0.344px;width:80px;overflow:hidden;">SCHD - Schedule</span>
<span class="t" id="t103" style="left:643.7px;top:510.1px;font-size:10.5px;line-height:15px;font-weight:400;color:#222;letter-spacing:0.064px;">27.50</span>
<span class="t" id="t104" style="left:735.1px;top:510.1px;font-size:10.5px;line-height:15px;font-weight:400;color:#222;letter-spacing:0.064px;">27.50</span>
<span class="t" id="t105" style="left:809.3px;top:510.1px;font-size:10.5px;line-height:15px;font-weight:400;color:#222;letter-spacing:0.116px;">0.00</span>
<span class="t" id="t106" style="left:885.5px;top:510.1px;font-size:10.5px;line-height:15px;font-weight:400;color:#222;letter-spacing:0.116px;">0.00</span>
<span class="t" id="t107" style="left:963.6px;top:510.1px;font-size:10.5px;line-height:15px;font-weight:400;color:#222;letter-spacing:0.116px;">0.00</span>
<span class="t" id="t108" style="left:1027.5px;top:510.1px;font-size:10.5px;line-height:15px;font-weight:400;color:#222;letter-spacing:0.116px;">0.00</span>
<span class="t" id="t109" style="left:212.2px;top:172.9px;font-size:11.5px;line-height:16px;font-weight:700;color:#3a2226;letter-spacing:-0.318px;z-index:30;">Time Tracking View</span>
<span class="t" id="t110" style="left:226.0px;top:201.1px;font-size:11.5px;line-height:16px;font-weight:400;color:#6a4448;letter-spacing:-0.153px;z-index:30;">Missed Visits</span>
<span class="t" id="t111" style="left:212.2px;top:233.9px;font-size:11.5px;line-height:16px;font-weight:700;color:#3a2226;letter-spacing:-0.326px;z-index:30;">EVV Aggregator</span>
<span class="t" id="t112" style="left:226.0px;top:262.0px;font-size:11.5px;line-height:16px;font-weight:400;color:#6a4448;letter-spacing:-0.151px;z-index:30;">Tellus</span>
<span class="t" id="t113" style="left:472.5px;top:312.8px;font-size:11.5px;line-height:16px;font-weight:700;color:#fff;letter-spacing:-0.471px;z-index:30;">Apply</span>
<span class="t" id="t114" style="left:1335.0px;top:521.8px;font-size:10px;line-height:14px;font-weight:700;color:#fff;letter-spacing:0.438px;z-index:41;">1</span>
<span class="t" id="t115" style="left:1219.8px;top:17.0px;font-size:16px;line-height:22px;font-weight:700;color:#fff;letter-spacing:-0.881px;-webkit-text-stroke:.4px #fff;">?</span>
<span class="t" id="t116" style="left:196.5px;top:308.8px;font-size:10.5px;line-height:15px;font-weight:400;color:#333;letter-spacing:0.117px;-webkit-text-stroke:.35px #333;">Sc</span>
</body></html>
